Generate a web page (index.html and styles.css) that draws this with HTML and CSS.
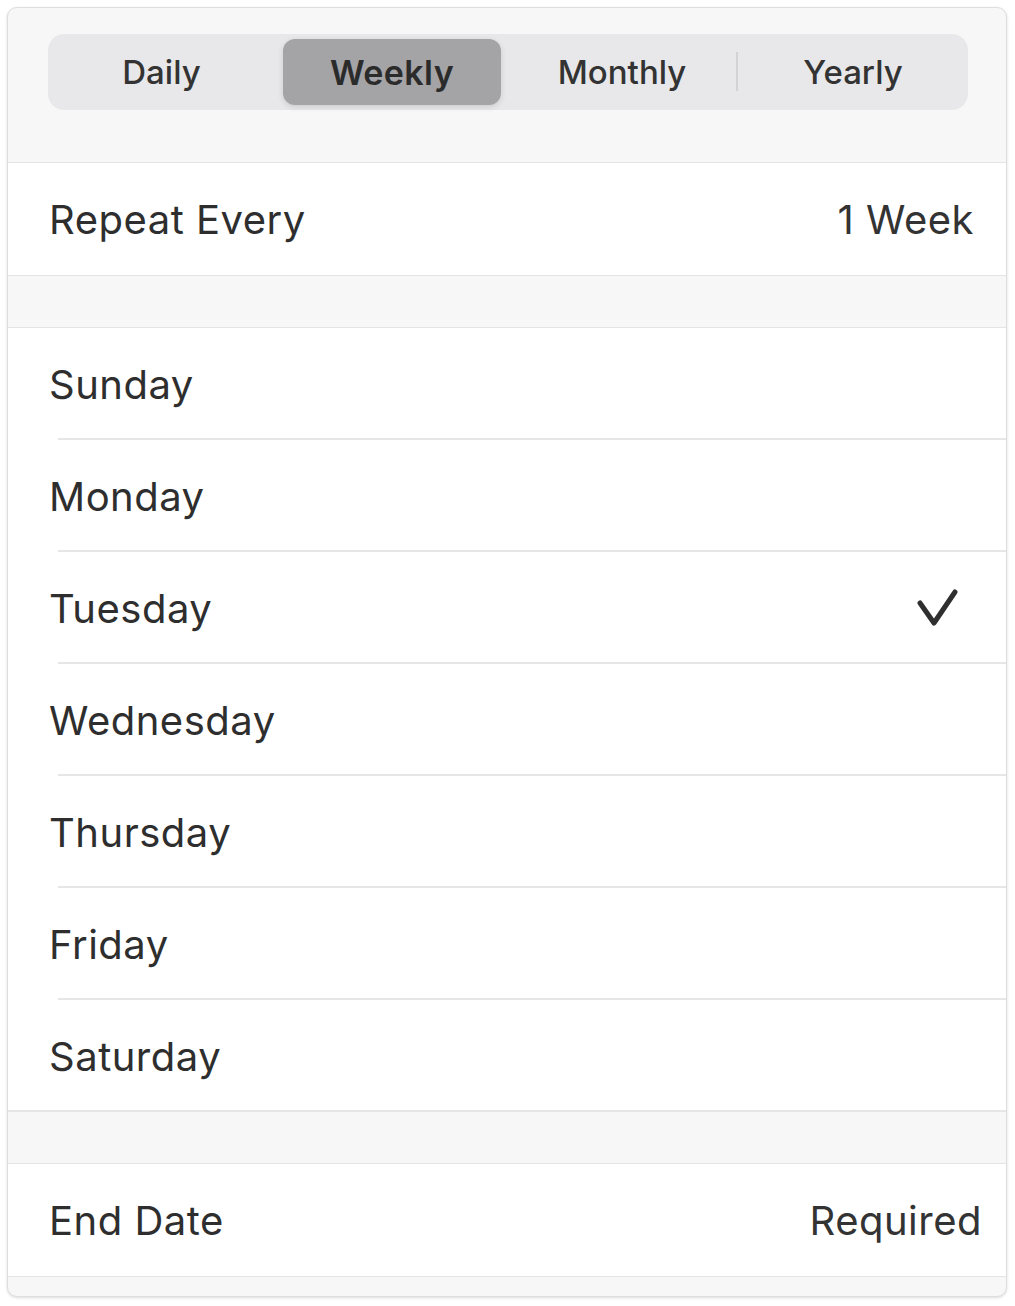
FILE: index.html
```html
<!DOCTYPE html>
<html lang="en">
<head>
<meta charset="utf-8">
<title>Repeat</title>
<link rel="stylesheet" href="styles.css">
</head>
<body>
<div class="card">
  <div class="top">
    <div class="segmented">
      <div class="seg s-daily">Daily</div>
      <div class="seg active">Weekly</div>
      <div class="seg s-monthly">Monthly</div>
      <div class="seg s-yearly divided">Yearly</div>
    </div>
  </div>
  <div class="row single">
    <span class="label">Repeat Every</span>
    <span class="value">1 Week</span>
  </div>
  <div class="gap"></div>
  <div class="group">
    <div class="row day"><span class="label">Sunday</span></div>
    <div class="row day"><span class="label">Monday</span></div>
    <div class="row day"><span class="label">Tuesday</span>
      <svg class="check" width="44" height="42" viewBox="0 0 44 42"><polyline points="6,16 20,36 41,5" fill="none" stroke="#2f2f2f" stroke-width="5" stroke-linecap="round" stroke-linejoin="round"/></svg>
    </div>
    <div class="row day"><span class="label">Wednesday</span></div>
    <div class="row day"><span class="label">Thursday</span></div>
    <div class="row day"><span class="label">Friday</span></div>
    <div class="row day last"><span class="label">Saturday</span></div>
  </div>
  <div class="gap"></div>
  <div class="row single end">
    <span class="label">End Date</span>
    <span class="value">Required</span>
  </div>
  <div class="foot"></div>
</div>
</body>
</html>
```
FILE: styles.css
```css
* { box-sizing: border-box; }
html, body { margin: 0; padding: 0; background: #ffffff; }
body {
  padding: 7px 8px 7px 7px;
  font-family: Inter, "Noto Sans", "Liberation Sans", sans-serif;
  color: #2f2f2f;
}
.card {
  width: 1000px;
  background: #f7f7f7;
  border: 1px solid #dedede;
  border-radius: 10px;
  box-shadow: 0 1px 3px rgba(0,0,0,0.14);
  overflow: hidden;
}
.top {
  height: 155px;
  padding: 26px 38px 0 40px;
  border-bottom: 1px solid #e4e4e4;
}
.segmented {
  display: grid;
  grid-template-columns: 227px 224px 233px 226px;
  height: 76px;
  padding: 5px;
  background: #e8e8ea;
  border-radius: 16px;
}
.seg {
  display: flex;
  align-items: center;
  justify-content: center;
  font-size: 33px;
  font-weight: 500;
  color: #333333;
  border-radius: 12px;
  position: relative;
}
.s-daily { padding-right: 10px; }
.s-monthly { padding-left: 3px; }
.s-yearly { padding-left: 6px; }
.seg.active {
  background: #a4a3a6;
  font-size: 34px;
  font-weight: 600;
  letter-spacing: 0.4px;
  color: #2b2b2b;
  margin: 0 3px;
  box-shadow: 0 2px 6px rgba(0,0,0,0.12);
}
.seg.divided::before {
  content: "";
  position: absolute;
  left: -1px;
  top: 13px;
  bottom: 14px;
  width: 2px;
  background: #d3d3d6;
}
.row {
  display: flex;
  align-items: center;
  justify-content: space-between;
  background: #ffffff;
  font-size: 40px;
  color: #2e2e2e;
}
.label { letter-spacing: 0.5px; }
.single {
  height: 113px;
  padding: 0 32px 0 41px;
  border-bottom: 1px solid #e4e4e4;
}
.single.end { padding-right: 24px; }
.value { color: #333333; letter-spacing: 0.5px; }
.gap {
  height: 52px;
  border-bottom: 1px solid #e4e4e4;
}
.group { background: #ffffff; }
.day {
  height: 112px;
  padding: 0 48px 0 41px;
  position: relative;
}
.day::after {
  content: "";
  position: absolute;
  left: 50px;
  right: 0;
  bottom: 0;
  height: 2px;
  background: #e6e6e6;
}
.day.last::after { left: 0; }
.check { display: block; }
.foot { height: 19px; }
```
